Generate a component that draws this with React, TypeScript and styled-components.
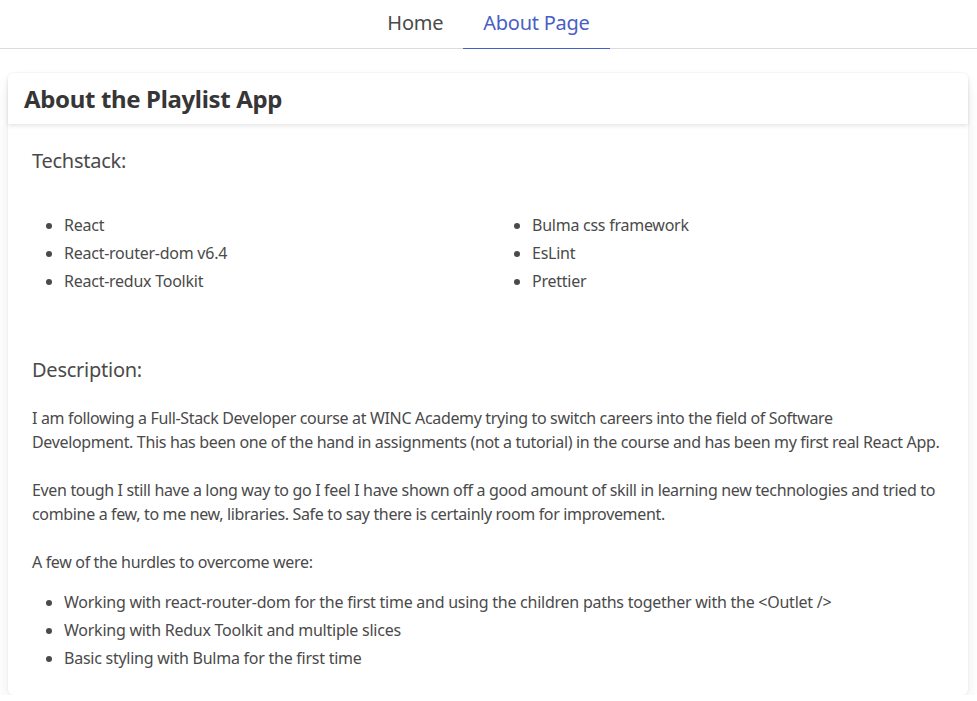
import React from 'react';
import styled, { createGlobalStyle } from 'styled-components';

const GlobalStyle = createGlobalStyle`
  html, body {
    margin: 0;
    padding: 0;
    background: #ffffff;
  }
  body {
    font-family: "Noto Sans", "Open Sans", sans-serif;
    color: #4a4a4a;
    font-size: 16px;
    letter-spacing: -0.25px;
  }
  * {
    box-sizing: border-box;
  }
`

const Tabs = styled.nav`
  display: flex;
  justify-content: center;
  border-bottom: 1px solid #dbdbdb;
  height: 49px;
`

const TabList = styled.ul`
  display: flex;
  list-style: none;
  margin: 0;
  padding: 0;
`

const Tab = styled.li<{ $active?: boolean }>`
  display: flex;
  align-items: center;
  padding: 0 20px 2px;
  font-size: 20px;
  line-height: 30px;
  letter-spacing: -0.25px;
  height: 49px;
  color: ${(p) => (p.$active ? '#485fc7' : '#4a4a4a')};
  border-bottom: 1px solid ${(p) => (p.$active ? '#485fc7' : 'transparent')};
  margin-bottom: -1px;
  cursor: pointer;
`

const Page = styled.main`
  padding: 24px 8px 0;
`

const Card = styled.section`
  max-width: 960px;
  background: #fff;
  border-radius: 6px;
  box-shadow: 0 8px 16px -2px rgba(10, 10, 10, 0.1), 0 0 0 1px rgba(10, 10, 10, 0.02);
  color: #4a4a4a;
`

const CardHeader = styled.header`
  display: flex;
  align-items: center;
  padding: 12px 16px;
  box-shadow: 0 2px 4px rgba(10, 10, 10, 0.1);
  border-radius: 6px 6px 0 0;
`

const CardTitle = styled.h1`
  margin: 0;
  font-size: 24px;
  line-height: 27px;
  font-weight: 700;
  letter-spacing: -0.35px;
  color: #363636;
`

const CardContent = styled.div`
  padding: 24px 24px 25px;
`

const Subtitle = styled.h2<{ $gap?: number }>`
  margin: 0 0 ${(p) => p.$gap ?? 0}px;
  font-size: 20px;
  line-height: 25px;
  font-weight: 400;
  color: #4a4a4a;
`

const Columns = styled.div`
  display: grid;
  grid-template-columns: 1fr 1fr;
  column-gap: 24px;
  margin: 40px 0 64px;
`

const List = styled.ul<{ $top?: number }>`
  list-style: disc outside;
  margin: ${(p) => p.$top ?? 0}px 0 0;
  padding-left: 32px;
`

const Item = styled.li`
  font-size: 16px;
  line-height: 24px;
  & + & {
    margin-top: 4px;
  }
`

const Paragraph = styled.p<{ $last?: boolean }>`
  margin: 0 0 ${(p) => (p.$last ? 0 : 24)}px;
  font-size: 16px;
  line-height: 24px;
  letter-spacing: -0.34px;
`

const stackLeft = ['React', 'React-router-dom v6.4', 'React-redux Toolkit']
const stackRight = ['Bulma css framework', 'EsLint', 'Prettier']
const hurdles = [
  'Working with react-router-dom for the first time and using the children paths together with the <Outlet />',
  'Working with Redux Toolkit and multiple slices',
  'Basic styling with Bulma for the first time',
]

const App: React.FC = () => {
  return (
    <>
      <GlobalStyle />
      <Tabs>
        <TabList>
          <Tab>Home</Tab>
          <Tab $active>About Page</Tab>
        </TabList>
      </Tabs>

      <Page>
        <Card>
          <CardHeader>
            <CardTitle>About the Playlist App</CardTitle>
          </CardHeader>

          <CardContent>
            <Subtitle>Techstack:</Subtitle>
            <Columns>
              <List>
                {stackLeft.map((item) => <Item key={item}>{item}</Item>)}
              </List>
              <List>
                {stackRight.map((item) => <Item key={item}>{item}</Item>)}
              </List>
            </Columns>

            <Subtitle $gap={24}>Description:</Subtitle>
            <Paragraph>
              I am following a Full-Stack Developer course at WINC Academy trying to switch careers into the field of
              Software
              <br />
              Development. This has been one of the hand in assignments (not a tutorial) in the course and has been my
              first real React App.
            </Paragraph>
            <Paragraph>
              Even tough I still have a long way to go I feel I have shown off a good amount of skill in learning new
              technologies and tried to combine a few, to me new, libraries. Safe to say there is certainly room for
              improvement.
            </Paragraph>
            <Paragraph $last>A few of the hurdles to overcome were:</Paragraph>
            <List $top={16}>
              {hurdles.map((item) => <Item key={item}>{item}</Item>)}
            </List>
          </CardContent>
        </Card>
      </Page>
    </>
  );
}

export default App;
